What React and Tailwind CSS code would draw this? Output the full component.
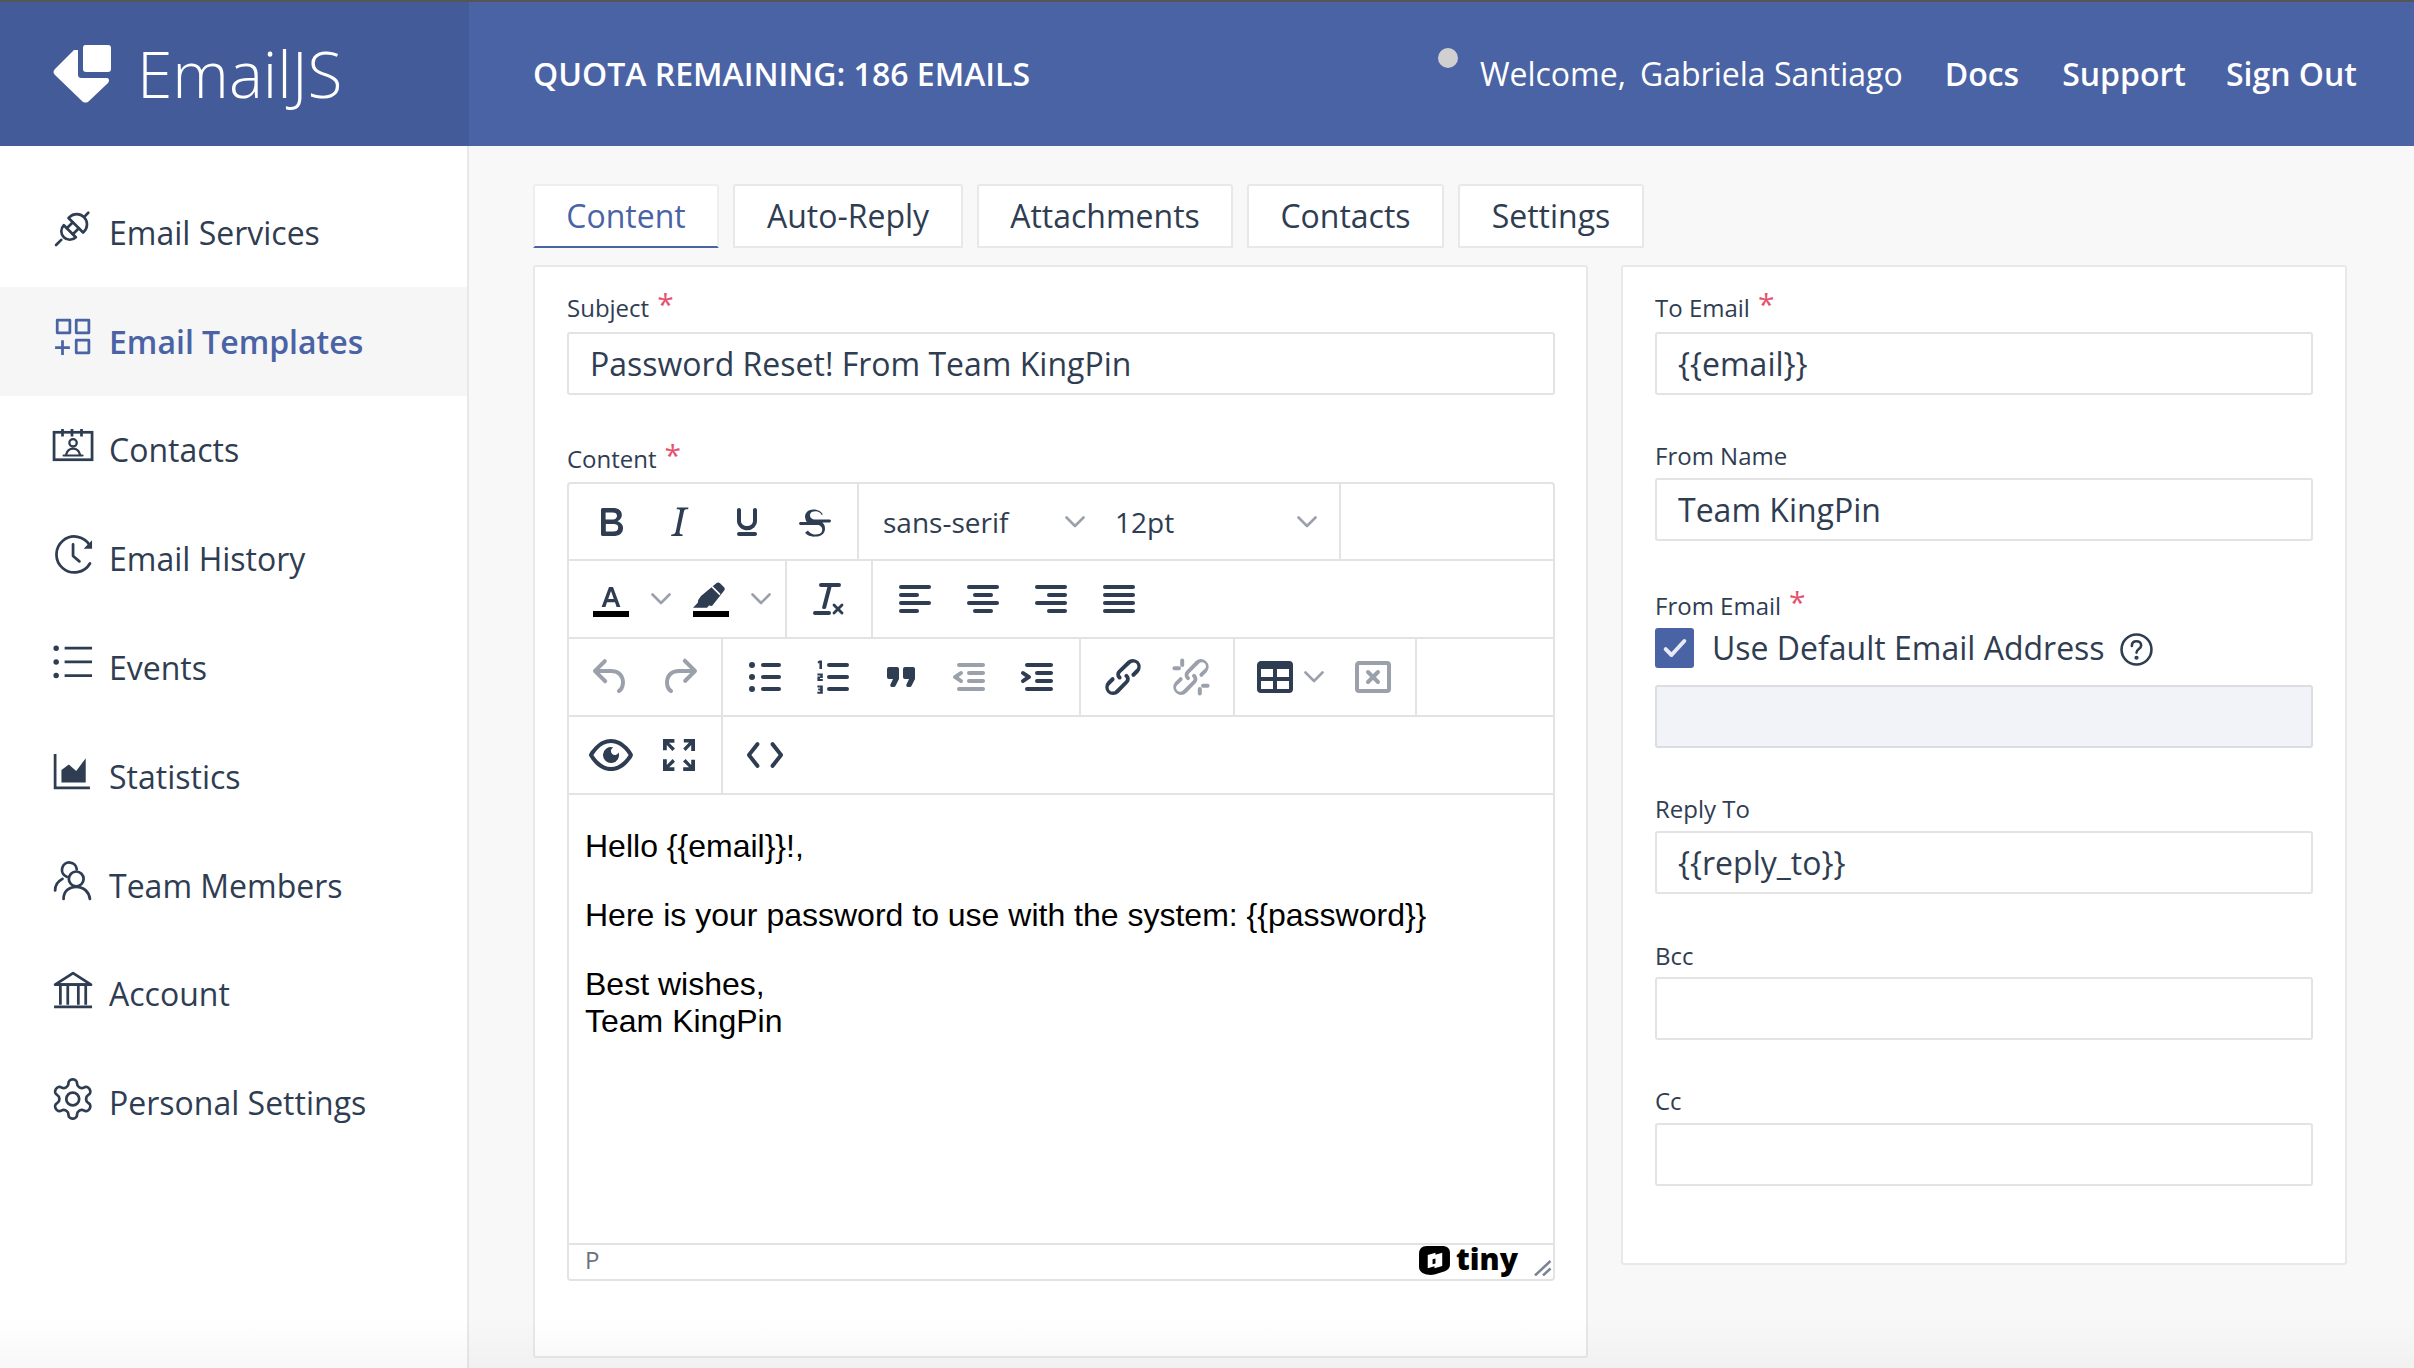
import React from "react";

const FONT = "font-['Open_Sans',sans-serif]";

function Tiny({ d, dim, children }) {
  return (
    <svg viewBox="0 0 24 24" width="48" height="48" fill="currentColor" className={dim ? "text-[#9aa1aa]" : "text-[#2f3d52]"}>
      {d ? <path d={d} /> : children}
    </svg>
  );
}

function Btn({ d, dim, children }) {
  return (
    <div className="w-[68px] h-full flex items-center justify-center shrink-0">
      <Tiny d={d} dim={dim}>{children}</Tiny>
    </div>
  );
}

function Chevron({ className = "" }) {
  return (
    <svg viewBox="0 0 20 12" width="20" height="12" fill="none" stroke="#9aa1aa" strokeWidth="2.600" strokeLinecap="round" strokeLinejoin="round" className={className}>
      <path d="M1.500 1.500 10 10l8.500-8.500" />
    </svg>
  );
}

function Group({ children, last }) {
  return <div className={`h-full flex items-center px-2 shrink-0 ${last ? "" : "border-r-2 border-[#e3e3e3]"}`}>{children}</div>;
}

function Row({ children, h = "h-[78px]" }) {
  return <div className={`${h} flex items-center border-b-2 border-[#e3e3e3]`}>{children}</div>;
}

const P = {
  bold: "M7.8 19c-.3 0-.5 0-.6-.2l-.2-.5V5.7c0-.2 0-.4.2-.5l.6-.2h5c1.5 0 2.7.3 3.5 1 .7.6 1.1 1.4 1.1 2.5a3 3 0 0 1-.6 1.9c-.4.6-1 1-1.6 1.2.4.1.9.3 1.3.6s.8.7 1 1.2c.4.4.5 1 .5 1.6 0 1.3-.4 2.3-1.3 3-.8.7-2.1 1-3.8 1H7.8zm5-8.3c.6 0 1.2-.1 1.6-.5.4-.3.6-.7.6-1.3 0-1.1-.8-1.7-2.3-1.7H9.3v3.5h3.4zm.5 6c.7 0 1.3-.1 1.7-.4.4-.4.6-.9.6-1.5s-.2-1-.7-1.4c-.4-.3-1-.4-2-.4H9.4v3.8h4z",
  italic: "M16.7 4.7l-.1.9h-.3c-.6 0-1 0-1.4.3-.3.3-.4.6-.5 1.1l-2.1 9.8v.6c0 .5.4.8 1.4.8h.2l-.2.8H8l.2-.8h.2c1.1 0 1.8-.5 2-1.5l2-9.8.1-.5c0-.6-.4-.8-1.4-.8h-.3l.2-.9h5.800z",
  underline: "M16 5c.6 0 1 .4 1 1v5.5a4 4 0 0 1-.4 1.8l-1 1.4a5.3 5.3 0 0 1-5.5 1 5 5 0 0 1-1.6-1c-.5-.4-.8-.9-1.1-1.4a4 4 0 0 1-.4-1.8V6c0-.6.4-1 1-1s1 .4 1 1v5.5c0 .3 0 .6.2 1l.6.7a3.3 3.3 0 0 0 2.2.8 3.4 3.4 0 0 0 2.2-.8c.3-.2.4-.5.6-.8l.2-.9V6c0-.6.4-1 1-1zM8 17h8c.6 0 1 .4 1 1s-.4 1-1 1H8a1 1 0 0 1 0-2z",
  strike: "M15.6 8.500c-.5-.7-1-1.100-1.300-1.300-.6-.4-1.300-.6-2-.6-2.700 0-2.800 1.700-2.800 2.100 0 1.300 1.100 1.800 2.300 2.100h7.200c.6 0 1 .3 1 .7s-.4.8-1 .8h-3.300c.8.8 1.300 1.700 1.300 2.900 0 1.400-.7 4.100-5 4.100A6.200 6.200 0 0 1 7 17.400l1.500-1.100c.4.600 1.600 2 3.700 2 1.600 0 2.500-.4 3-1 .3-.4.4-1 .4-1.500 0-.5-.1-1-.5-1.400-.3-.3-.7-.7-1.300-.9H5c-.6 0-1-.4-1-.8s.4-.7 1-.7h3c-.4-.4-.6-.8-.7-1.300A3.600 3.600 0 0 1 7 9.400c0-1.400.9-3.700 4.300-3.700 1.200 0 2.200.3 3 .8.6.4 1.200 1 1.700 1.700l-1.400.3z",
  removeformat: "M13.2 6a1 1 0 0 1 0 .2l-2.6 10a1 1 0 0 1-1 .8h-.2a.8.8 0 0 1-.8-1l2.6-10H8a1 1 0 1 1 0-2h9a1 1 0 0 1 0 2h-3.8zM5 18h7a1 1 0 0 1 0 2H5a1 1 0 0 1 0-2zm13 1.500L16.500 18 15 19.500a.7.7 0 0 1-1-1l1.500-1.500-1.500-1.500a.7.7 0 0 1 1-1l1.500 1.500 1.500-1.500a.7.7 0 0 1 1 1L17.500 17l1.500 1.500a.7.7 0 0 1-1 1z",
  undo: "M6.4 8H12c3.7 0 6.2 2 6.8 5.1.6 2.7-.4 5.6-2.3 6.8a1 1 0 0 1-1-1.8c1.1-.6 1.8-2.7 1.4-4.6-.5-2.1-2.1-3.5-4.9-3.5H6.4l3.3 3.3a1 1 0 1 1-1.4 1.4l-5-5a1 1 0 0 1 0-1.4l5-5a1 1 0 0 1 1.4 1.4L6.4 8z",
  redo: "M17.6 10H12c-2.8 0-4.4 1.4-4.9 3.5-.4 2 .3 4 1.4 4.6a1 1 0 1 1-1 1.8c-2-1.2-2.9-4.1-2.3-6.8.6-3 3-5.1 6.8-5.1h5.6l-3.3-3.3a1 1 0 1 1 1.4-1.4l5 5a1 1 0 0 1 0 1.4l-5 5a1 1 0 0 1-1.4-1.4l3.3-3.3z",
  quote: "M7.5 17h.9c.4 0 .7-.2.9-.6L11 13V8c0-.6-.4-1-1-1H6a1 1 0 0 0-1 1v4c0 .6.4 1 1 1h2l-1.3 2.7a1 1 0 0 0 .8 1.3zm8 0h.9c.4 0 .7-.2.9-.6L19 13V8c0-.6-.4-1-1-1h-4a1 1 0 0 0-1 1v4c0 .6.4 1 1 1h2l-1.3 2.7a1 1 0 0 0 .8 1.3z",
  outdent: "M7 5h12c.6 0 1 .4 1 1s-.4 1-1 1H7a1 1 0 1 1 0-2zm5 4h7c.6 0 1 .4 1 1s-.4 1-1 1h-7a1 1 0 0 1 0-2zm0 4h7c.6 0 1 .4 1 1s-.4 1-1 1h-7a1 1 0 0 1 0-2zm-5 4h12a1 1 0 0 1 0 2H7a1 1 0 0 1 0-2zm1.6-3.8a1 1 0 0 1-1.2 1.6l-3-2a1 1 0 0 1 0-1.6l3-2a1 1 0 0 1 1.2 1.6L6.8 12l1.8 1.2z",
  indent: "M7 5h12c.6 0 1 .4 1 1s-.4 1-1 1H7a1 1 0 1 1 0-2zm5 4h7c.6 0 1 .4 1 1s-.4 1-1 1h-7a1 1 0 0 1 0-2zm0 4h7c.6 0 1 .4 1 1s-.4 1-1 1h-7a1 1 0 0 1 0-2zm-5 4h12a1 1 0 0 1 0 2H7a1 1 0 0 1 0-2zm-2.6-3.8L6.2 12l-1.8-1.2a1 1 0 0 1 1.2-1.6l3 2a1 1 0 0 1 0 1.6l-3 2a1 1 0 1 1-1.2-1.6z",
  link: "M6.2 12.3a1 1 0 0 1 1.4 1.4l-2 2a2 2 0 1 0 2.8 2.8l4.8-4.8a1 1 0 0 0 0-1.4 1 1 0 1 1 1.4-1.3 2.9 2.9 0 0 1 0 4L9.8 20a4 4 0 0 1-5.6-5.7l2-2zm11.6-.6a1 1 0 0 1-1.4-1.4l2-2a2 2 0 1 0-2.8-2.8L10.8 10a1 1 0 0 0 0 1.4 1 1 0 1 1-1.4 1.3 2.9 2.9 0 0 1 0-4L14.2 4a4 4 0 0 1 5.6 5.7l-2 2z",
  unlink: "M6.2 12.3a1 1 0 0 1 1.4 1.4l-2.1 2a2 2 0 1 0 2.7 2.8l4.8-4.8a1 1 0 0 0 0-1.4 1 1 0 1 1 1.4-1.3 2.9 2.9 0 0 1 0 4L9.6 20a3.9 3.9 0 0 1-5.5-5.5l2-2zm11.6-.6a1 1 0 0 1-1.4-1.4l2.1-2a2 2 0 1 0-2.7-2.8L11 10.3a1 1 0 0 0 0 1.4A1 1 0 1 1 9.6 13a2.9 2.9 0 0 1 0-4L14.4 4a3.9 3.9 0 0 1 5.5 5.5l-2 2zM7.6 2.7a1 1 0 0 1 1 1V6a1 1 0 0 1-2 0V3.7a1 1 0 0 1 1-1zm8.8 14.3a1 1 0 0 1 1 1v2.3a1 1 0 0 1-2 0V18a1 1 0 0 1 1-1zM2.7 7.6a1 1 0 0 1 1-1H6a1 1 0 0 1 0 2H3.7a1 1 0 0 1-1-1zm14.3 8.8a1 1 0 0 1 1-1h2.3a1 1 0 0 1 0 2H18a1 1 0 0 1-1-1z",
  table: "M19 4a2 2 0 0 1 2 2v12a2 2 0 0 1-2 2H5a2 2 0 0 1-2-2V6c0-1.1.9-2 2-2h14zM5 14v4h6v-4H5zm14 0h-6v4h6v-4zm0-6h-6v4h6V8zM5 12h6V8H5v4z",
  eye: "M3.5 12.5c.5.8 1.1 1.6 1.8 2.3 2 2 4.2 3.2 6.7 3.2s4.7-1.2 6.7-3.2a16.2 16.2 0 0 0 2.1-2.8 15.7 15.7 0 0 0-2.1-2.8c-2-2-4.2-3.2-6.7-3.2a9.3 9.3 0 0 0-6.7 3.2A16.2 16.2 0 0 0 3.2 12c0 .2.2.3.3.5zm-2.4-1l.7-1.2L4 7.8C6.2 5.4 8.9 4 12 4c3 0 5.8 1.4 8.1 3.8a18.2 18.2 0 0 1 2.8 3.7v1l-.7 1.2-2.1 2.500c-2.3 2.4-5 3.8-8.1 3.8-3 0-5.8-1.4-8.1-3.8a18.2 18.2 0 0 1-2.8-3.7 1 1 0 0 1 0-1zm12-3.3a2 2 0 1 0 2.7 2.6 4 4 0 1 1-2.7-2.6z",
  fullscreen: "M15.3 10l-1.2-1.3 2.900-3h-2.600V4H20v6h-1.900V7l-2.800 3zm0 4l2.800 3v-2.600H20V20h-5.900v-1.900H17l-3-2.900 1.300-1.200zM10 15.400l-2.900 2.700h2.600V20H4v-5.900h1.900V17l2.900-3 1.200 1.400zM8.700 10L5.900 7v2.600H4V4h5.700v1.900H7l3 2.900-1.300 1.200z",
  code: "M9 7.2L5.2 12 9 16.8a1 1 0 1 1-1.6 1.2l-4.2-5.4a1 1 0 0 1 0-1.2L7.4 6A1 1 0 1 1 9 7.2zm6 0a1 1 0 0 1 1.6-1.2l4.2 5.4a1 1 0 0 1 0 1.2L16.6 18a1 1 0 1 1-1.6-1.2l3.8-4.8L15 7.2z",
  gear: "M12.220 2h-.44a2 2 0 0 0-2 2v.18a2 2 0 0 1-1 1.730l-.43.25a2 2 0 0 1-2 0l-.15-.08a2 2 0 0 0-2.730.73l-.22.38a2 2 0 0 0 .73 2.730l.15.1a2 2 0 0 1 1 1.720v.51a2 2 0 0 1-1 1.740l-.15.09a2 2 0 0 0-.73 2.730l.22.38a2 2 0 0 0 2.730.73l.15-.08a2 2 0 0 1 2 0l.43.25a2 2 0 0 1 1 1.730V20a2 2 0 0 0 2 2h.44a2 2 0 0 0 2-2v-.18a2 2 0 0 1 1-1.730l.43-.25a2 2 0 0 1 2 0l.15.08a2 2 0 0 0 2.730-.73l.22-.39a2 2 0 0 0-.73-2.730l-.15-.08a2 2 0 0 1-1-1.740v-.5a2 2 0 0 1 1-1.740l.15-.09a2 2 0 0 0 .73-2.730l-.22-.38a2 2 0 0 0-2.730-.73l-.15.08a2 2 0 0 1-2 0l-.43-.25a2 2 0 0 1-1-1.730V4a2 2 0 0 0-2-2z",
};

function Lines({ rows }) {
  return <>{rows.map((r, i) => <rect key={i} x={r[0]} y={5 + i * 4} width={r[1]} height="2" rx="1" />)}</>;
}

function Toolbar() {
  return (
    <div>
      <Row h="h-[77px]">
        <Group>
          <Btn d={P.bold} /><Btn d={P.italic} /><Btn d={P.underline} /><Btn d={P.strike} />
        </Group>
        <div className="h-full w-[482px] shrink-0 flex items-center border-r-2 border-[#e3e3e3] text-[28px] text-[#2f3d52]">
          <div className="w-[240px] pl-[24px] flex items-center justify-between pr-[14px]"><span>sans-serif</span><Chevron /></div>
          <div className="w-[240px] pl-[16px] flex items-center justify-between pr-[22px]"><span>12pt</span><Chevron /></div>
        </div>
      </Row>
      <Row>
        <Group>
          <Btn>
            <path fillRule="evenodd" d="M7.300 16 11 6h2l3.700 10h-1.900l-.8-2.400h-4l-.8 2.400zM10.600 12h2.800L12 8z" />
            <rect x="3" y="18" width="18" height="3" fill="#000" />
          </Btn>
          <div className="w-[32px] flex justify-center"><Chevron /></div>
          <Btn>
            <path d="M7 10.500 14.800 4c.5-.4 1.200-.4 1.700.1l2 2c.5.5.5 1.200.1 1.700L12.500 15.500l-1.500-.3-1 1.200H3l2.400-2.500.2-1.400z" />
            <rect x="3" y="18" width="18" height="3" fill="#000" />
            <path d="m12.500 5.800 4 4" stroke="#fff" strokeWidth="0.800" />
          </Btn>
          <div className="w-[32px] flex justify-center"><Chevron /></div>
        </Group>
        <Group><Btn d={P.removeformat} /></Group>
        <Group last>
          <Btn><Lines rows={[[4, 16], [4, 10], [4, 16], [4, 10]]} /></Btn>
          <Btn><Lines rows={[[4, 16], [7, 10], [4, 16], [7, 10]]} /></Btn>
          <Btn><Lines rows={[[4, 16], [10, 10], [4, 16], [10, 10]]} /></Btn>
          <Btn><Lines rows={[[4, 16], [4, 16], [4, 16], [4, 16]]} /></Btn>
        </Group>
      </Row>
      <Row>
        <Group><Btn d={P.undo} dim /><Btn d={P.redo} dim /></Group>
        <Group>
          <Btn>
            <circle cx="5.500" cy="6" r="1.500" /><circle cx="5.500" cy="12" r="1.500" /><circle cx="5.500" cy="18" r="1.500" />
            <rect x="10" y="5" width="10" height="2" rx="1" /><rect x="10" y="11" width="10" height="2" rx="1" /><rect x="10" y="17" width="10" height="2" rx="1" />
          </Btn>
          <Btn>
            <path d="M5.200 3.800h1.300V8H5.200V5l-.8.200v-.9z M4.200 10.200h2.700v2.300H5.500v.5h1.400v1H4.200v-2.300h1.400v-.5H4.200z M4.200 16.200h2.700v4.200H4.200v-1h1.400v-.6H4.600v-1h1v-.6H4.200z" />
            <rect x="9" y="5" width="11" height="2" rx="1" /><rect x="9" y="11" width="11" height="2" rx="1" /><rect x="9" y="17" width="11" height="2" rx="1" />
          </Btn>
          <Btn d={P.quote} />
          <Btn d={P.outdent} dim />
          <Btn d={P.indent} />
        </Group>
        <Group><Btn d={P.link} /><Btn d={P.unlink} dim /></Group>
        <Group>
          <div className="w-[57px] ml-[3px] h-full flex items-center justify-center"><Tiny d={P.table} /></div>
          <div className="w-[22px] mr-[14px] flex justify-center"><Chevron /></div>
          <Btn dim>
            <path fillRule="evenodd" d="M19 4a2 2 0 0 1 2 2v12a2 2 0 0 1-2 2H5a2 2 0 0 1-2-2V6c0-1.100.9-2 2-2h14zM5 6v12h14V6H5z" />
            <path d="m9.500 9.500 5 5m0-5-5 5" stroke="currentColor" strokeWidth="2" strokeLinecap="round" />
          </Btn>
        </Group>
      </Row>
      <Row>
        <Group><Btn d={P.eye} /><Btn d={P.fullscreen} /></Group>
        <Group last><Btn d={P.code} /></Group>
      </Row>
    </div>
  );
}

function Icon({ children }) {
  return (
    <svg viewBox="0 0 36 36" width="38" height="38" fill="none" stroke="currentColor" strokeWidth="2.600" strokeLinecap="round" strokeLinejoin="round" className="-mt-2 shrink-0 overflow-visible">
      {children}
    </svg>
  );
}

const NAV = [
  ["Email Services", (
    <g transform="translate(2 -1) rotate(-45 18 18) translate(18 18) scale(1.150) translate(-18 -18)" strokeWidth="2.200">
      <path d="M-3 18h6M29.500 18h5" />
      <path d="M13 11a7 7 0 0 0 0 14z" />
      <path d="M13 14.500h7M13 21.500h7" />
      <path d="M20 9.500v17h1a8.500 8.500 0 0 0 0-17z" />
    </g>
  )],
  ["Email Templates", (
    <>
      <rect x="4" y="2" width="12" height="12" />
      <rect x="22" y="2" width="12" height="12" />
      <rect x="22" y="21" width="12" height="12" />
      <path d="M2 28h14M9 21v14" strokeLinecap="butt" />
    </>
  )],
  ["Contacts", (
    <>
      <rect x="1" y="5" width="36" height="26" strokeLinejoin="miter" strokeLinecap="butt" />
      <path d="M9 2v7M18 2v7M27 2v7" strokeLinecap="butt" />
      <circle cx="19" cy="15" r="3.500" strokeWidth="2.200" />
      <path d="M12.500 26c1-4 3-5.500 6.500-5.500s5.500 1.500 6.500 5.500" strokeWidth="2.200" />
      <path d="M10 27h18" strokeWidth="2" />
    </>
  )],
  ["Email History", (
    <g transform="translate(1 0)">
      <path d="M34 26a17 17 0 1 1 0-17" />
      <path d="M36 4v8h-8" strokeWidth="0" fill="currentColor" />
      <path d="M18 8v11l6 5" />
    </g>
  )],
  ["Events", (
    <>
      <path d="M11 3h26M11 16h26M11 29h26" strokeLinecap="butt" />
      <circle cx="3" cy="3" r="1.300" fill="currentColor" />
      <circle cx="3" cy="16" r="1.300" fill="currentColor" />
      <circle cx="3" cy="29" r="1.300" fill="currentColor" />
    </>
  )],
  ["Statistics", (
    <>
      <path d="M2 1v32h33" strokeLinecap="butt" strokeLinejoin="miter" />
      <path d="M8 28V16l7-5 7 6 9-12v23z" fill="currentColor" stroke="none" />
    </>
  )],
  ["Team Members", (
    <>
      <path d="M13 14a7 7 0 1 1 9.500-7" />
      <path d="M2 27c0-5 3-9 7-11" />
      <circle cx="22" cy="16" r="7" />
      <path d="M10 35c0-7 5-11.500 12-11.500S34 28 35 35" />
    </>
  )],
  ["Account", (
    <>
      <path d="M2 13 19 2l17 11z" />
      <path d="M2 13h34M7 14v18M14 14v18M24 14v18M31 14v18M1 34h36" strokeLinecap="butt" />
    </>
  )],
  ["Personal Settings", (
    <g transform="translate(-3.500 -4.200) scale(1.850)" strokeWidth="1.400">
      <path d={P.gear} />
      <circle cx="12" cy="12" r="3.300" />
    </g>
  )],
];

function Sidebar() {
  return (
    <aside className="w-[469px] shrink-0 bg-white border-r-2 border-[#e8e8e8] pt-[32px]">
      {NAV.map(([label, ic], i) => {
        const active = i === 1;
        return (
          <div key={label} className={`h-[108.800px] flex items-center pl-[53px] gap-[18px] text-[32px] ${active ? "bg-[#f6f6f6] text-[#4a63a5] font-semibold" : "text-[#2f3d52]"}`}>
            <Icon>{ic}</Icon>
            <span className="whitespace-nowrap mt-[1px]">{label}</span>
          </div>
        );
      })}
    </aside>
  );
}

function Req() {
  return <span className="text-[#e6516f] text-[30px] leading-[24px] ml-[8px] relative top-[-4px]">*</span>;
}

function Label({ children, req, cls = "" }) {
  return <div className={`h-[24px] flex items-center text-[24px] leading-[24px] text-[#2f3d52] whitespace-nowrap ${cls}`}>{children}{req && <Req />}</div>;
}

function Input({ value, cls = "", disabled }) {
  return (
    <div className={`h-[63px] rounded-[3px] border-2 flex items-center px-[21px] text-[32px] text-[#2f3d52] whitespace-nowrap ${disabled ? "bg-[#f1f3f9] border-[#dcdde3]" : "bg-white border-[#e3e3e3]"} ${cls}`}>
      {value}
    </div>
  );
}

function Tab({ children, active, w }) {
  return (
    <div className={`h-[64px] flex items-center justify-center text-[32px] bg-white rounded-t-[3px] shrink-0 ${w} ${active ? "text-[#4a63a5] border-x-2 border-t-2 border-[#eeeeee] border-b-2 !border-b-[#4a63a5]" : "text-[#2f3d52] border-2 border-[#e8e8e8]"}`}>
      {children}
    </div>
  );
}

function Editor() {
  return (
    <div className="h-[799px] border-2 border-[#e3e3e3] rounded-[4px] flex flex-col bg-white">
      <Toolbar />
      <div className="flex-1 pl-[16px] pt-[33px] font-['Liberation_Sans',sans-serif] text-[32px] leading-[37px] text-black">
        <p>Hello {"{{email}}"}!,</p>
        <p className="mt-[32px]">Here is your password to use with the system: {"{{password}}"}</p>
        <p className="mt-[32px]">Best wishes,<br />Team KingPin</p>
      </div>
      <div className="h-[36px] border-t-2 border-[#e3e3e3] flex items-center pl-[16px] pr-[1px] text-[24px] text-[#6b7280]">
        <span className="-mt-1">P</span>
        <div className="ml-auto h-full flex items-center text-black font-extrabold text-[30px] leading-[30px]">
          <svg viewBox="0 0 32 30" width="31" height="29" className="mr-[6px] -mt-[4px]">
            <path fillRule="evenodd" d="M8 0h16c5 0 8 2.500 8 7v12c0 4-2 6-6 7.500l-10 3C8 31 0 28 0 22V8c0-5 3-8 8-8zm16 7-7 2v-2l-8 2.300v13.700l7-2v2l8-2.300zM17 13v5l-3 .8v-5z" fill="#000" />
          </svg>
          <span className="-mt-[6px]">tiny</span>
          <svg viewBox="0 0 18 16" width="18" height="16" className="ml-[16px] self-end mb-[3px]">
            <path d="M1 15.500 16.500 1M9 15.500l7.500-7" stroke="#7b8494" strokeWidth="2.500" fill="none" />
          </svg>
        </div>
      </div>
    </div>
  );
}

export default function App() {
  return (
    <div className={`w-[2414px] h-[1368px] overflow-hidden relative flex flex-col bg-[#f8f8f8] ${FONT}`}>
      <div className="h-[2px] bg-[#555555] shrink-0" />
      <header className="h-[144px] shrink-0 flex bg-[#4a63a5] text-white">
        <div className="w-[469px] shrink-0 bg-[#435b99] flex items-center pl-[52px]">
          <svg viewBox="52 44 60 60" width="60" height="60" className="shrink-0">
            <path d="M85 45h23c2 0 3 1 3 3v21c0 2-1 3-3 3H86c-2 0-3-1-3-3V48c0-2 1-3 2-3z" fill="#fff" />
            <path d="M74 50h4v24c0 3 1 4 4 4h24c3 0 4 2 2 5L89 101c-2 2-5 2-7 0L55 75c-2-2-2-4 0-6z" fill="#fff" />
          </svg>
          <span className="ml-[25px] text-[64px] leading-none font-light -mt-[1px]">EmailJS</span>
        </div>
        <div className="flex-1 flex items-center pl-[64px] pr-[57px] text-[32px]">
          <span className="font-semibold">QUOTA REMAINING: 186 EMAILS</span>
          <div className="ml-auto flex items-center">
            <span className="w-[20px] h-[20px] rounded-full bg-[#d0d0d0] mr-[22px] -mt-[32px]" />
            <span>Welcome,</span>
            <span className="ml-[14px]">Gabriela Santiago</span>
            <span className="font-semibold ml-[42px]">Docs</span>
            <span className="font-semibold ml-[43px]">Support</span>
            <span className="font-semibold ml-[40px]">Sign Out</span>
          </div>
        </div>
      </header>
      <div className="flex-1 flex min-h-0">
        <Sidebar />
        <main className="flex-1 pl-[64px] pt-[38px] min-w-0">
          <div className="flex gap-[14px]">
            <Tab active w="w-[186px]">Content</Tab>
            <Tab w="w-[230px]">Auto-Reply</Tab>
            <Tab w="w-[256px]">Attachments</Tab>
            <Tab w="w-[197px]">Contacts</Tab>
            <Tab w="w-[186px]">Settings</Tab>
          </div>
          <div className="flex gap-[33px] mt-[17px] items-start">
            <section className="w-[1055px] h-[1093px] bg-white border-2 border-[#e8e8e8] rounded-[3px] pl-[32px] pr-[31px] pt-[29px]">
              <Label req>Subject</Label>
              <Input cls="mt-[12px]" value="Password Reset! From Team KingPin" />
              <Label req cls="mt-[52px] mb-[11px]">Content</Label>
              <Editor />
            </section>
            <section className="w-[726px] h-[1000px] bg-white border-2 border-[#e8e8e8] rounded-[3px] pl-[32px] pr-[32px] pt-[29px]">
              <Label req>To Email</Label>
              <Input cls="mt-[12px]" value="{{email}}" />
              <Label cls="mt-[49px] mb-[10px]">From Name</Label>
              <Input value="Team KingPin" />
              <Label req cls="mt-[53px] mb-[10px]">From Email</Label>
              <div className="h-[40px] flex items-center text-[32px] text-[#2f3d52] whitespace-nowrap">
                <span className="w-[39px] h-[40px] rounded-[3px] bg-[#4a63a5] flex items-center justify-center">
                  <svg viewBox="0 0 24 24" width="28" height="28" fill="none" stroke="#e8ebf5" strokeWidth="3.400" strokeLinecap="round" strokeLinejoin="round"><path d="m4 13 5 5L20 6" /></svg>
                </span>
                <span className="ml-[18px]">Use Default Email Address</span>
                <svg viewBox="0 0 32 32" width="33" height="33" fill="none" stroke="#2f3d52" strokeWidth="2.500" className="ml-[15px] mt-[2px]" strokeLinecap="round">
                  <circle cx="16" cy="16" r="14.500" />
                  <path d="M11.500 12.500c0-3 2-4.500 4.500-4.500s4.500 1.500 4.500 4c0 3.500-4.500 3.500-4.500 7" />
                  <circle cx="16" cy="24" r="0.800" fill="#2f3d52" />
                </svg>
              </div>
              <Input disabled cls="mt-[17px]" value="" />
              <Label cls="mt-[49px] mb-[10px]">Reply To</Label>
              <Input value="{{reply_to}}" />
              <Label cls="mt-[50px] mb-[9px]">Bcc</Label>
              <Input value="" />
              <Label cls="mt-[49px] mb-[10px]">Cc</Label>
              <Input value="" />
            </section>
          </div>
        </main>
      </div>
      <div className="absolute left-0 right-0 bottom-0 h-[50px] pointer-events-none bg-gradient-to-b from-transparent to-black/[0.03]" />
    </div>
  );
}
